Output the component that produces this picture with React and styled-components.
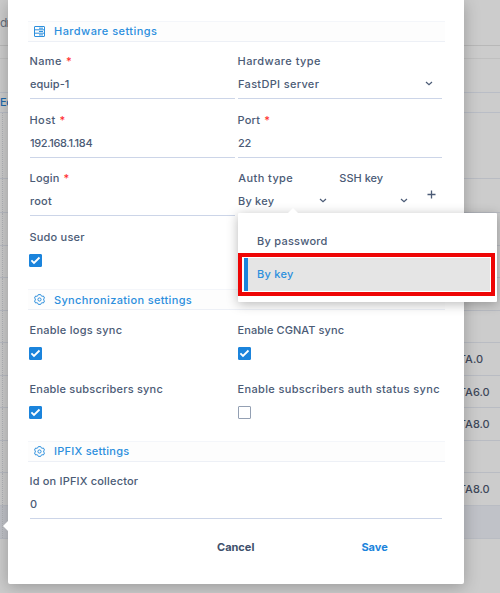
import React, {useState} from 'react';
import styled, {createGlobalStyle} from 'styled-components';

const GlobalStyle = createGlobalStyle`
    *
    {
        box-sizing: border-box;
    }
    body
    {
        margin: 0;
        font-family: "Inter", "Liberation Sans", sans-serif;
        font-size: 11px;
        font-weight: 500;
        color: #4b5b76;
        overflow: hidden;
    }
`;

// rows of the equipment table behind the dialog
const tableRows = [
    {height: 66},
    {height: 34},
    {height: 33},
    {height: 32},
    {height: 33},
    {height: 32},
    {height: 33, version: 'BETA.0'},
    {height: 32, version: 'BETA6.0'},
    {height: 33, version: 'BETA8.0'},
    {height: 32},
    {height: 33, version: 'BETA8.0'},
    {height: 33, active: true},
];

function ServerIcon()
{
    return (
        <svg width="11" height="11" viewBox="0 0 11 11" fill="none" stroke="currentColor" strokeWidth="1">
            <rect x="0.5" y="0.5" width="10" height="10" rx="0.4"/>
            <path d="M0.5 3.8h10M0.5 7.2h10M5 2.2h4M5 5.5h4M5 8.9h4"/>
        </svg>
    );
}

function GearIcon()
{
    return (
        <svg width="11" height="11" viewBox="0 0 11 11" fill="none" stroke="currentColor" strokeWidth="1" strokeLinejoin="round">
            <path d="M4.3 0.6h2.4l.4 1.1 1 .6 1.3-.3 1.1 2-.8.9v1.2l.8.9-1.1 2-1.3-.3-1 .6-.4 1.1H4.3l-.4-1.1-1-.6-1.3.3-1.1-2 .8-.9V4.9L.5 4l1.1-2 1.3.3 1-.6z"/>
            <circle cx="5.5" cy="5.5" r="1.6"/>
        </svg>
    );
}

function Chevron()
{
    return (
        <svg width="8" height="6" viewBox="0 0 8 6" fill="none" stroke="#4b5b76" strokeWidth="1.2">
            <path d="M1 1l3 2.8L7 1"/>
        </svg>
    );
}

function Section({icon, title, spacing})
{
    return (
        <SectionBar>
            {icon}
            <Text $spacing={spacing}>{title}</Text>
        </SectionBar>
    );
}

function Field({label, value, required, select, labelSpacing, valueSpacing})
{
    return (
        <FieldBox>
            <Label $spacing={labelSpacing}>{label}{required && <Star>*</Star>}</Label>
            <Value $select={select}>
                <Text $spacing={valueSpacing}>{value}</Text>
                {select && <Chevron/>}
            </Value>
        </FieldBox>
    );
}

function Check({label, spacing, initial = true})
{
    const [checked, setChecked] = useState(initial);
    return (
        <CheckBox>
            <Label $spacing={spacing}>{label}</Label>
            <Tick $checked={checked} onClick={() => setChecked(prev => !prev)}>
                {checked &&
                <svg width="11" height="9" viewBox="0 0 11 9" fill="none" stroke="#fff" strokeWidth="1.8">
                    <path d="M1.4 4.3l2.6 2.6 5.5-5.4"/>
                </svg>}
            </Tick>
        </CheckBox>
    );
}

function App()
{
    return (
        <Page>
            <GlobalStyle/>
            <TopBar>dr</TopBar>
            <Gap/>
            <Toolbar/>
            <TableHead>Equipment</TableHead>
            {tableRows.map((row, i) => (
                <TableRow key={i} $height={row.height} $active={row.active}>
                    <DragHandle/>
                    <Version>{row.version}</Version>
                </TableRow>
            ))}
            <Dialog>
                <Section icon={<ServerIcon/>} title="Hardware settings" spacing={0.45}/>
                <Columns>
                    <Field label="Name" value="equip-1" valueSpacing={0.05} labelSpacing={0.4} required/>
                    <Field label="Hardware type" value="FastDPI server" labelSpacing={0.45} valueSpacing={0.32} select/>
                    <Field label="Host" value="192.168.1.184" valueSpacing={-0.35} labelSpacing={0.4} required/>
                    <Field label="Port" value="22" valueSpacing={-0.2} required/>
                    <Field label="Login" value="root" required/>
                    <AuthRow>
                        <Field label="Auth type" value="By key" labelSpacing={0.4} select/>
                        <Field label="SSH key" value="" labelSpacing={0} select/>
                        <Plus>
                            <svg width="9" height="9" viewBox="0 0 9 9" stroke="#4b5b76" strokeWidth="1.3">
                                <path d="M4.5 0.5v8M0.5 4.5h8"/>
                            </svg>
                        </Plus>
                    </AuthRow>
                    <Check label="Sudo user"/>
                </Columns>
                <Section icon={<GearIcon/>} title="Synchronization settings" spacing={0.34}/>
                <Columns>
                    <Check label="Enable logs sync" spacing={0.25}/>
                    <Check label="Enable CGNAT sync" spacing={0.08}/>
                    <Check label="Enable subscribers sync"/>
                    <Check label="Enable subscribers auth status sync" spacing={0.35} initial={false}/>
                </Columns>
                <Section icon={<GearIcon/>} title="IPFIX settings" spacing={0.25}/>
                <Columns $single>
                    <Field label="Id on IPFIX collector" value="0" labelSpacing={0.18}/>
                </Columns>
                <Actions>
                    <Button>Cancel</Button>
                    <Button $primary>Save</Button>
                </Actions>
                <DialogArrow/>
            </Dialog>
            <Menu>
                <MenuArrow/>
                <Option>By password</Option>
                <Highlight>
                    <Option $selected>By key</Option>
                </Highlight>
            </Menu>
        </Page>
    );
}

const Page = styled.div`
    position: relative;
    width: 500px;
    height: 593px;
    overflow: hidden;
    background: #cccccc;
`;

const TopBar = styled.div`
    height: 46px;
    padding-top: 14px;
    font-size: 12px;
    font-weight: 400;
    line-height: 17px;
    letter-spacing: -0.8px;
    color: #626b7b;
    border-bottom: 1px solid #b8b8b8;
`;

const Gap = styled.div`
    height: 13px;
    border-bottom: 1px solid #c0c0c0;
`;

const Toolbar = styled.div`
    height: 34px;
    border-bottom: 1px solid #b9bdc6;
`;

const TableHead = styled.div`
    height: 20px;
    line-height: 19px;
    letter-spacing: -0.5px;
    color: #1c69ac;
    border-bottom: 1px solid #b9bdc6;
`;

const TableRow = styled.div`
    display: flex;
    align-items: center;
    justify-content: space-between;
    height: ${props => props.$height}px;
    padding: 0 11px 0 2px;
    color: #3e485a;
    background: ${props => props.$active ? '#c0c2c8' : 'transparent'};
    border-bottom: 1px solid #b9bcc3;
`;

const DragHandle = styled.div`
    align-self: stretch;
    border-left: 1px dotted #b0b2b6;
`;

const Version = styled.div`
    width: 44px;
`;

const Dialog = styled.div`
    position: absolute;
    left: 8px;
    top: 0;
    width: 456px;
    height: 584px;
    padding: 7px 19px 0 20px;
    background: #fff;
    border-radius: 0 0 2px 2px;
    box-shadow: 0 3px 16px rgba(0, 0, 0, 0.25);
`;

const Text = styled.span`
    letter-spacing: ${props => props.$spacing ?? 0.2}px;
`;

const SectionBar = styled.div`
    display: flex;
    align-items: center;
    gap: 9px;
    height: 21px;
    margin-top: 13.5px;
    padding-left: 6px;
    color: #2c8fdd;
    background: #fdfdfd;
    border-top: 1px solid #f4f6fa;
    border-bottom: 1px solid #edf0f6;
`;

const Columns = styled.div`
    display: grid;
    grid-template-columns: ${props => props.$single ? '1fr' : '205px 204px'};
    column-gap: 3px;
    padding: 0 3px 0 2px;
`;

const FieldBox = styled.div`
    height: 58.5px;
    padding-top: 12.5px;
`;

const Label = styled.div`
    height: 15px;
    line-height: 15px;
    margin-left: -0.5px;
    white-space: nowrap;
    letter-spacing: ${props => props.$spacing ?? 0.2}px;
`;

const Star = styled.span`
    margin-left: 4px;
    color: #ff2b2b;
`;

const Value = styled.div`
    display: flex;
    align-items: center;
    justify-content: space-between;
    height: 30px;
    padding: ${props => props.$select ? '0 9px 0 0' : '1px 0 0 0'};
    border-bottom: 1px solid #ccd5e8;
`;

const AuthRow = styled.div`
    display: grid;
    grid-template-columns: 98px 78px 1fr;
    column-gap: 3px;

    ${Label}
    {
        margin-left: 0.3px;
    }
`;

const Plus = styled.div`
    padding: 29.5px 0 0 7px;
`;

const CheckBox = styled.div`
    height: 58.5px;
    padding-top: 13px;
`;

const Tick = styled.div`
    display: flex;
    align-items: center;
    justify-content: center;
    width: 13px;
    height: 13px;
    margin-top: 9px;
    border-radius: 1px;
    border: 1px solid ${props => props.$checked ? '#1b84dc' : '#94a0b3'};
    background: ${props => props.$checked ? '#1b84dc' : '#fff'};

    ${CheckBox}:nth-child(odd) &
    {
        margin-left: -1px;
    }
`;

const Actions = styled.div`
    display: flex;
    gap: 107px;
    padding: 18.5px 0 0 189px;
`;

const Button = styled.button`
    padding: 0;
    border: 0;
    background: none;
    font: 700 11px/16px "Inter", sans-serif;
    color: ${props => props.$primary ? '#1b84dc' : '#40506c'};
`;

const DialogArrow = styled.div`
    position: absolute;
    left: -5px;
    top: 521px;
    border: 5px solid transparent;
    border-left: 0;
    border-right-color: #fff;
`;

const Menu = styled.div`
    position: absolute;
    left: 238px;
    top: 213px;
    width: 259px;
    height: 89px;
    padding-top: 12px;
    background: #fff;
    border-radius: 1px;
    box-shadow: 0 2px 12px rgba(0, 0, 0, 0.28);
`;

const MenuArrow = styled.div`
    position: absolute;
    left: 50px;
    top: -5px;
    border: 5px solid transparent;
    border-top: 0;
    border-bottom-color: #fff;
`;

const Highlight = styled.div`
    width: 257px;
    height: 43px;
    margin-top: -4px;
    padding: 1px 1px 1px 2px;
    border: 4px solid #ee0505;
`;

const Option = styled.div`
    display: flex;
    align-items: center;
    height: ${props => props.$selected ? 33 : 32}px;
    padding: ${props => props.$selected ? '0 0 2px 9px' : '0 0 0 19px'};
    letter-spacing: 0.25px;
    color: ${props => props.$selected ? '#2c8fdd' : '#4b5b76'};
    background: ${props => props.$selected ? '#e5e5e5' : '#fff'};
    border-left: ${props => props.$selected ? '4px solid #1b84dc' : '0'};
`;

export default App;
